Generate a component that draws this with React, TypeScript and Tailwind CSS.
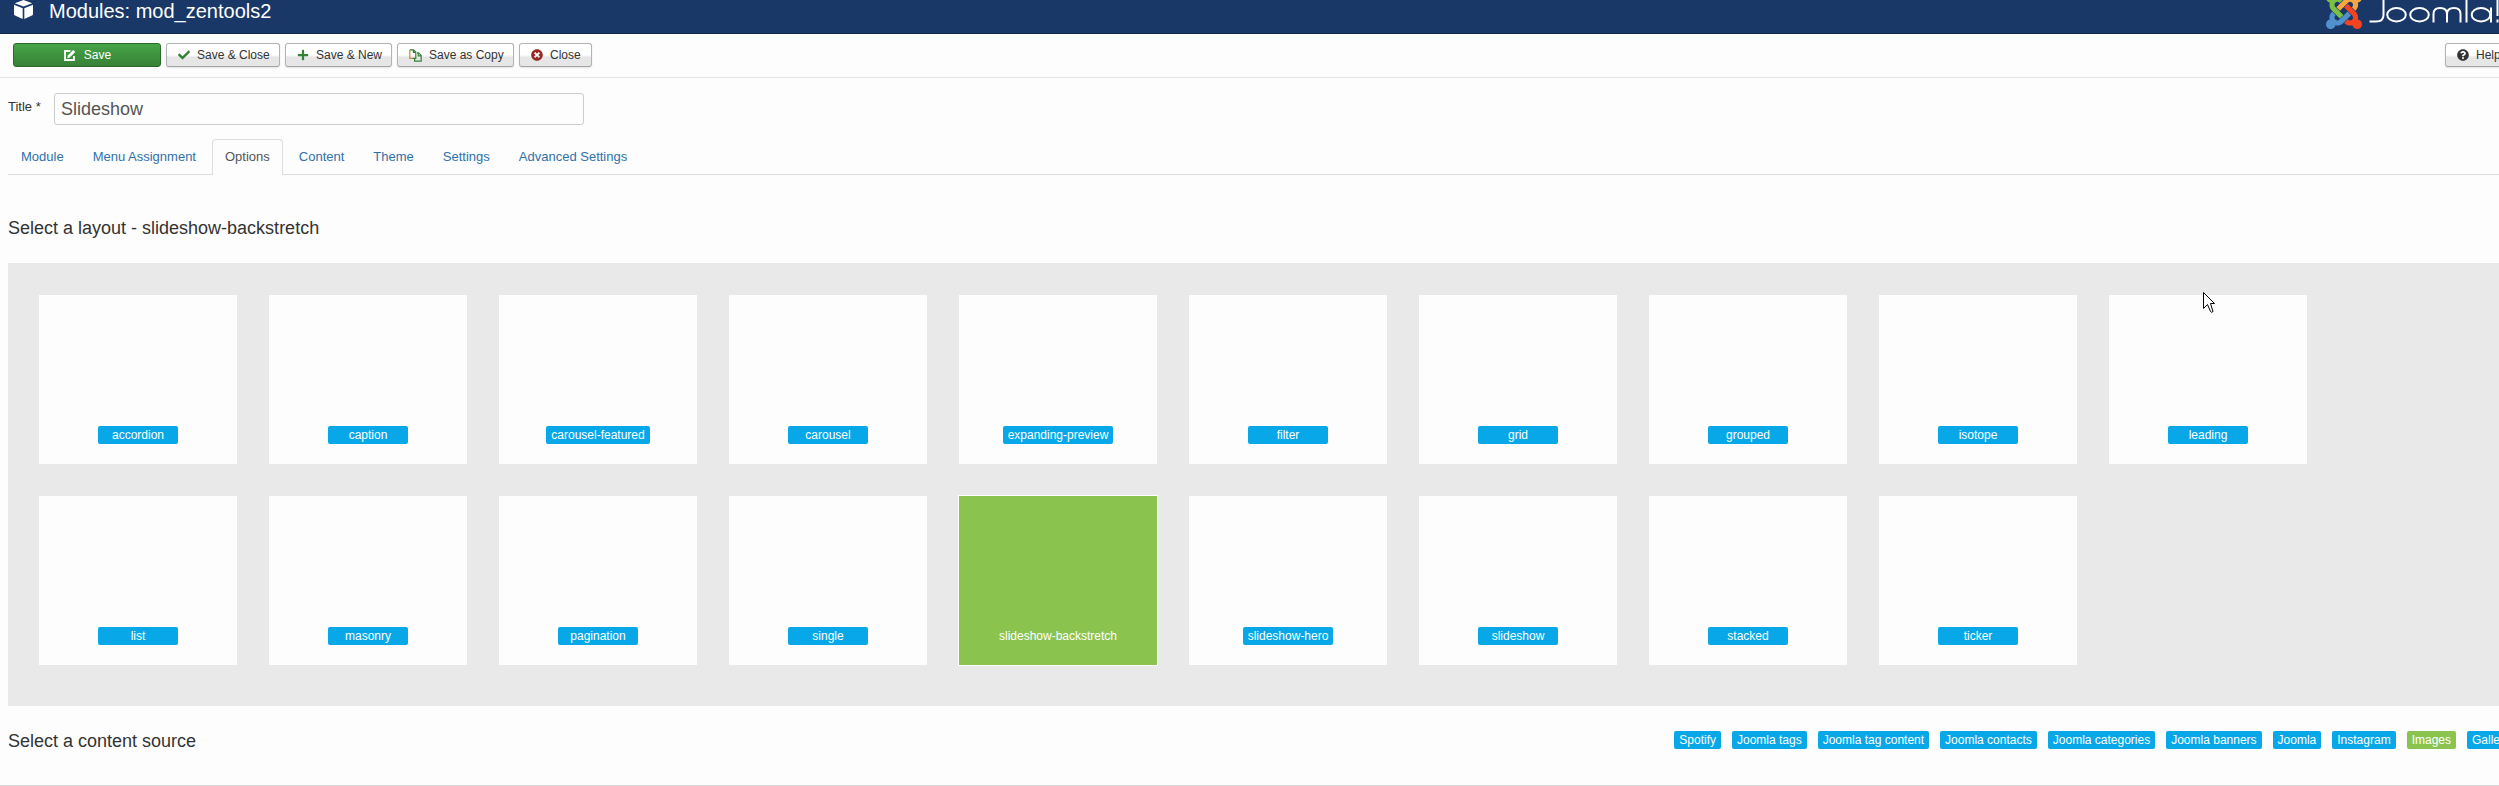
import React from "react";
import { FaCheck, FaPlus, FaTimesCircle, FaQuestionCircle } from "react-icons/fa";

const layouts = [
  "accordion", "caption", "carousel-featured", "carousel", "expanding-preview", "filter", "grid", "grouped", "isotope", "leading",
  "list", "masonry", "pagination", "single", "slideshow-backstretch", "slideshow-hero", "slideshow", "stacked", "ticker",
];

const tabs = ["Module", "Menu Assignment", "Options", "Content", "Theme", "Settings", "Advanced Settings"];

const sources = [
  "Spotify", "Joomla tags", "Joomla tag content", "Joomla contacts", "Joomla categories", "Joomla banners",
  "Joomla", "Instagram", "Images", "Gallery",
];

function CubeIcon() {
  return (
    <svg viewBox="0 0 19 19" className="h-[19px] w-[19px]" aria-hidden="true" fill="#fff">
      <path d="M9.500 0L18.200 3.200L9.500 6.600L.8 3.200Z" />
      <path d="M0 4.700L8.700 8.200V19L1 15.600Q0 15.200 0 14.200Z" />
      <path d="M19 4.700L10.300 8.200V19L18 15.600Q19 15.200 19 14.200Z" />
    </svg>
  );
}

function EditIcon() {
  return (
    <svg viewBox="0 0 14 14" className="h-[13px] w-[13px]" aria-hidden="true">
      <path d="M8 2.200H2.200v9.600h9.600V7.500" fill="none" stroke="#fff" strokeWidth="2" />
      <path d="M4.600 9.600l.5-2.600L11 1l2.200 2.100-5.900 6z" fill="#fff" />
    </svg>
  );
}

function CopyIcon() {
  return (
    <svg viewBox="0 0 13 13" className="size-[13px]" aria-hidden="true" fill="none" strokeWidth="1.200">
      <path d="M3.500 9.400H.8V.8" stroke="#d08a2c" />
      <path d="M.8.800H4.600L6.800 3V9.400H3.500M4.400.8V3.400H6.800" stroke="#378137" />
      <path d="M8 3.800H9.600l2.600 2.600v5.800H5.600V9.400M9.200 3.800v3h3" stroke="#378137" />
    </svg>
  );
}

function ToolButton({ icon, label, className }: { icon: React.ReactNode; label: string; className: string }) {
  return (
    <button
      type="button"
      className={
        "flex h-6 shrink-0 items-center gap-[7px] rounded-[3px] border border-[#b3b3b3] border-b-[#a2a2a2] bg-linear-to-b from-white from-50% to-[#e6e6e6] to-60% pl-[11px] text-[12px] text-[#333] shadow-[0_1px_2px_rgba(0,0,0,0.1)] " +
        className
      }
    >
      {icon}
      {label}
    </button>
  );
}

function JoomlaLogo() {
  return (
    <svg viewBox="0 0 173 34" className="h-[34px] w-[173px] shrink-0" role="img" aria-label="Joomla!">
      <svg x="0" y="-7" width="36" height="36" viewBox="0 32 448 448">
        <path fill="#7ac143" d="M.6 92.1C.6 58.8 27.4 32 60.4 32c30 0 54.5 21.9 59.2 50.2 32.6-7.6 67.1.6 96.5 30l-44.3 44.3c-20.5-20.5-42.6-16.3-55.4-3.500-14.300 14.300-14.300 37.900 0 52.200l99.500 99.500-44 44.300c-87.700-87.200-49.700-49.700-99.800-99.700-26.800-26.500-35-64.800-24.800-98.900C20.400 144.600.6 120.700.6 92.100z" />
        <path fill="#f9a541" d="M130.100 208.500l44.300 44.300c10-10 89.700-89.700 99.700-99.800 14.300-14.300 37.600-14.300 51.900 0 12.800 12.800 17 35-3.500 55.400l44 44.300c31.200-31.200 38.500-67.600 28.900-101.200 29.200-4.100 51.900-29.200 51.900-59.500 0-33.200-26.800-60.100-59.800-60.100-30.300 0-55.400 22.500-59.500 51.600-33.800-9.900-71.700-1.500-98.300 25.100-18.300 19.100-71.100 71.500-99.600 99.900z" />
        <path fill="#f44321" d="M396.400 360.700c8.200-32.700-.9-68.500-26.300-93.900-11.800-12.200 5 4.700-99.500-99.700l-44.300 44.300 99.700 99.700c14.300 14.300 14.300 37.600 0 51.900-12.800 12.800-35 17-55.400-3.500l-44 44.300c27.600 30.200 68 38.800 102.700 28 5.500 27.400 29.700 48.100 58.900 48.100 33 0 59.800-26.800 59.800-60.100 0-30.200-22.500-55-51.600-59.100z" />
        <path fill="#5091cd" d="M312.100 307.600l-44-44.300c-87 86.400-50.400 50.400-99.700 99.800-14.300 14.300-37.600 14.300-51.900 0-13.100-13.400-16.900-35.300 3.200-55.400l-44-44.300c-30.200 30.200-38 65.200-29.500 98.300-26.700 6-46.200 29.900-46.200 58.200C0 453.200 26.800 480 59.800 480c28.600 0 52.500-19.800 58.600-46.700 32.700 8.200 68.500-.6 94.200-26 32.100-32 12.200-12.400 99.500-99.700z" />
      </svg>
      <g fill="none" stroke="#fff" strokeWidth="2">
        <path d="M57.500 -4V15Q57.500 21.500 50 21.500H43.500" />
        <ellipse cx="70.500" cy="14.800" rx="9.300" ry="6.700" />
        <ellipse cx="93.500" cy="14.800" rx="9.300" ry="6.700" />
        <path d="M107.500 22.500V14Q107.500 8 114 8Q121 8 121 14V22.500M121 14Q121 8 128 8Q134.500 8 134.500 14V22.500" />
        <path d="M140.500 -4V22.500" />
        <ellipse cx="155" cy="14.800" rx="9.300" ry="6.700" />
        <path d="M165 7.500V22.500M171.500 -4V16M171.500 19.500V22.500" />
      </g>
    </svg>
  );
}

export default function App() {
  return (
    <div className="min-h-screen overflow-x-hidden bg-[#fdfdfd] font-['Liberation_Sans',Arial,sans-serif] text-[13px] text-[#333]">
      <header className="flex h-[34px] items-start justify-between overflow-hidden border-b border-[#142849] bg-[#1a3867] pl-3.5 text-white">
        <div className="flex items-start gap-4">
          <CubeIcon />
          <h1 className="text-[20px] leading-[22px]">Modules: mod_zentools2</h1>
        </div>
        <JoomlaLogo />
      </header>

      <div className="flex h-11 items-start justify-between border-b border-[#e5e5e5] pt-[9px] pl-[13px]">
        <div className="flex gap-[5px]">
          <button
            type="button"
            className="flex h-6 w-[148px] items-center justify-center gap-2 rounded-[3px] border border-[#2b6a2b] bg-linear-to-b from-[#46a546] to-[#378137] text-[12px] text-white"
          >
            <EditIcon />
            Save
          </button>
          <ToolButton className="w-[114px]" label="Save & Close" icon={<FaCheck className="size-3 text-[#378137]" />} />
          <ToolButton className="w-[107px]" label="Save & New" icon={<FaPlus className="size-3 text-[#378137]" />} />
          <ToolButton className="w-[117px]" label="Save as Copy" icon={<CopyIcon />} />
          <ToolButton className="w-[73px]" label="Close" icon={<FaTimesCircle className="size-3 text-[#942a25]" />} />
        </div>
        <ToolButton className="-mr-4 w-[70px]" label="Help" icon={<FaQuestionCircle className="size-3" />} />
      </div>

      <main className="pl-2">
        <div className="flex items-start pt-[15px]">
          <label htmlFor="title" className="w-[46px] pt-[5px] text-[13px] leading-[18px]">Title *</label>
          <input
            id="title"
            type="text"
            defaultValue="Slideshow"
            className="h-8 w-[530px] rounded-[3px] border border-[#ccc] bg-[#fdfdfd] px-1.5 text-[18px] text-[#555]"
          />
        </div>

        <nav className="mt-3.5 flex h-9 gap-[3px] border-b border-[#ddd]">
          {tabs.map((tab) => (
            <a
              key={tab}
              href="#"
              className={
                tab === "Options"
                  ? "h-9 rounded-t border border-b-0 border-[#ddd] bg-[#fdfdfd] px-3 text-[13px] leading-[34px] text-[#555]"
                  : "h-9 border border-b-0 border-transparent px-3 text-[13px] leading-[34px] text-[#3071a9]"
              }
            >
              {tab}
            </a>
          ))}
        </nav>

        <h2 className="mt-10 text-[18px] leading-[26px]">Select a layout - slideshow-backstretch</h2>

        <section className="mt-[22px] flex flex-wrap gap-8 bg-[#e9e9e9] pt-8 pr-40 pb-[41px] pl-[31px]">
          {layouts.map((name) =>
            name === "slideshow-backstretch" ? (
              <button key={name} type="button" className="flex h-[169px] w-[198px] items-end justify-center bg-[#8bc34f] pb-5 text-[12px] leading-[18px] text-white outline outline-white">
                {name}
              </button>
            ) : (
              <button key={name} type="button" className="relative flex h-[169px] w-[198px] items-end justify-center bg-[#fdfdfd] pb-5 text-[12px] leading-[18px] text-white">
                <span className="min-w-20 rounded-xs bg-[#08a8e8] px-[5px]">{name}</span>
                {name === "leading" && (
                  <svg viewBox="0 0 12 21" className="absolute -top-[3px] left-[94px] h-[21px] w-3" aria-hidden="true">
                    <path d="M.5.500V16.500L4.500 12.500L7.500 19.500Q8.500 21 10 19.500L7.500 11.500H11.500Z" fill="#fff" stroke="#000" />
                  </svg>
                )}
              </button>
            ),
          )}
        </section>

        <section className="flex h-[79px] items-start justify-between overflow-hidden pt-[22px]">
          <h2 className="text-[18px] leading-[26px]">Select a content source</h2>
          <div className="-mr-4 flex gap-[11px] pt-[3px]">
            {sources.map((s) => (
              <button
                key={s}
                type="button"
                className={
                  s === "Images"
                    ? "h-[18px] rounded-xs bg-[#8bc34f] px-[5px] text-[12px] leading-[18px] whitespace-nowrap text-white"
                    : "h-[18px] rounded-xs bg-[#08a8e8] px-[5px] text-[12px] leading-[18px] whitespace-nowrap text-white"
                }
              >
                {s}
              </button>
            ))}
          </div>
        </section>
      </main>
      <hr className="border-[#d5d5d5]" />
    </div>
  );
}
